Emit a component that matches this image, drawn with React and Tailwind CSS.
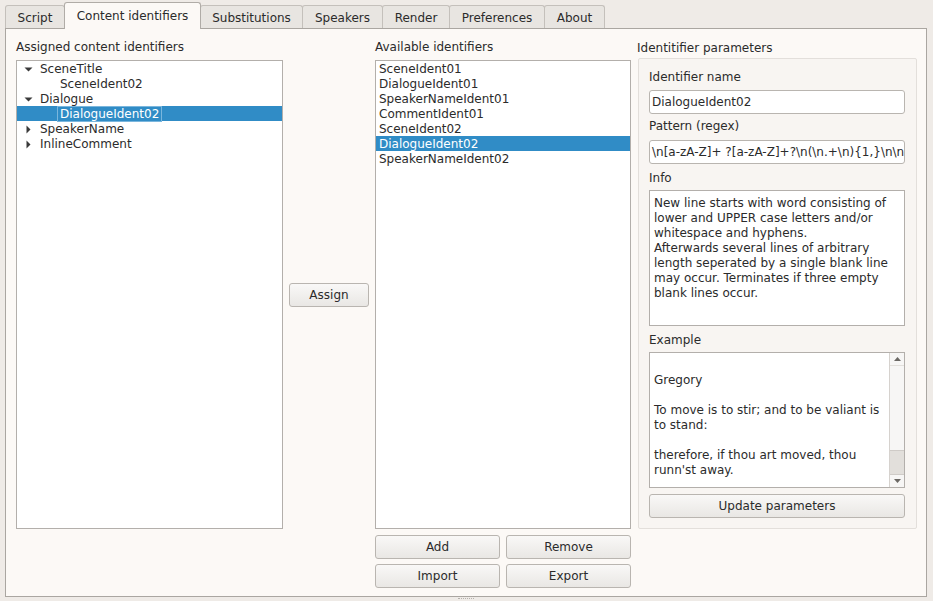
import React from 'react';

const tabs = [
  { label: 'Script', w: 'w-[60px]' },
  { label: 'Content identifiers', w: 'w-[137px]', active: true },
  { label: 'Substitutions', w: 'w-[103px]' },
  { label: 'Speakers', w: 'w-[81px]' },
  { label: 'Render', w: 'w-[68px]' },
  { label: 'Preferences', w: 'w-[96px]' },
  { label: 'About', w: 'w-[61px]' },
];

const available = [
  'SceneIdent01',
  'DialogueIdent01',
  'SpeakerNameIdent01',
  'CommentIdent01',
  'SceneIdent02',
  'DialogueIdent02',
  'SpeakerNameIdent02',
];

function Arrow({ open }) {
  return (
    <svg width="9" height="9" viewBox="0 0 9 9" className="shrink-0">
      {open ? <path d="M0.5 2.5 L8.5 2.5 L4.5 6.5 Z" fill="#3a3a3a" /> : <path d="M2.5 0.5 L6.5 4.5 L2.5 8.5 Z" fill="#3a3a3a" />}
    </svg>
  );
}

function Button({ children, className = '' }) {
  return (
    <button className={`h-[24px] rounded-[3px] border border-[#b9b5b0] bg-gradient-to-b from-[#f9f8f7] to-[#e9e7e4] text-[12px] text-[#2b2b2b] ${className}`}>
      {children}
    </button>
  );
}

function TreeRow({ children, depth = 0, open, selected }) {
  return (
    <div className={`flex h-[15px] items-center leading-[15px] ${selected ? 'bg-[#308cc6] text-white' : ''}`}>
      <div className="flex w-[23px] shrink-0 justify-center pt-[1px]">
        {open !== undefined && <Arrow open={open} />}
      </div>
      <span className={`pt-[1px] ${depth ? 'pl-[20px]' : ''}`}>
        {selected ? <span className="-ml-[3px] border border-[#7ab6dd] px-[2px]">{children}</span> : children}
      </span>
    </div>
  );
}

function Field({ value }) {
  return (
    <div className="h-[24px] overflow-hidden whitespace-nowrap rounded-[3px] border border-[#b9b5b0] bg-white px-[2px] text-[12px] leading-[22px] text-[#2b2b2b]">
      {value}
    </div>
  );
}

export default function App() {
  return (
    <div className="h-[601px] w-[933px] overflow-hidden bg-[#efebe7] font-['DejaVu_Sans',sans-serif] text-[12px] text-[#2b2b2b]">
      {/* tab strip */}
      <div className="flex h-[28px] items-end pl-[5px]">
        {tabs.map((t, i) =>
          t.active ? (
            <div
              key={t.label}
              className={`${t.w} relative z-10 -mb-[1px] -ml-[1px] flex h-[27px] items-center justify-center rounded-t-[3px] border border-b-0 border-[#b0aca7] bg-[#fcf9f6] pb-[1px]`}
            >
              {t.label}
            </div>
          ) : (
            <div
              key={t.label}
              className={`${t.w} ${i ? '-ml-[1px]' : ''} flex h-[23px] items-center justify-center rounded-t-[3px] border border-b-0 border-[#c4c0bb] bg-[#e8e5e1] pt-[1px]`}
            >
              {t.label}
            </div>
          )
        )}
      </div>

      {/* tab pane */}
      <div className="ml-[5px] flex h-[569px] w-[922px] border border-[#aaa6a1] bg-[#fcf9f6] pl-[10px] pt-[10px]">
        {/* assigned */}
        <div className="flex w-[267px] flex-col">
          <div className="h-[21px] pt-[1px] leading-[15px]">Assigned content identifiers</div>
          <div className="h-[469px] border border-[#b3afab] bg-white">
            <TreeRow open>SceneTitle</TreeRow>
            <TreeRow depth={1}>SceneIdent02</TreeRow>
            <TreeRow open>Dialogue</TreeRow>
            <TreeRow depth={1} selected>DialogueIdent02</TreeRow>
            <TreeRow open={false}>SpeakerName</TreeRow>
            <TreeRow open={false}>InlineComment</TreeRow>
          </div>
        </div>

        {/* assign */}
        <div className="ml-[6px] flex h-[490px] w-[80px] items-center pt-[21px]">
          <Button className="w-[80px]">Assign</Button>
        </div>

        {/* available */}
        <div className="ml-[6px] flex w-[256px] flex-col">
          <div className="h-[21px] pt-[1px] leading-[15px]">Available identifiers</div>
          <div className="h-[469px] border border-[#b3afab] bg-white">
            {available.map((a, i) => (
              <div key={a} className={`h-[15px] pl-[3px] pt-[1px] leading-[15px] ${i === 5 ? 'bg-[#308cc6] text-white' : ''}`}>
                {a}
              </div>
            ))}
          </div>
          <div className="mt-[6px] grid grid-cols-2 gap-x-[6px] gap-y-[5px]">
            <Button>Add</Button>
            <Button>Remove</Button>
            <Button>Import</Button>
            <Button>Export</Button>
          </div>
        </div>

        {/* parameters */}
        <div className="ml-[6px] flex w-[280px] flex-col">
          <div className="h-[19px] pt-[2px] leading-[15px]">Identitifier parameters</div>
          <div className="ml-[1px] flex h-[471px] flex-col rounded-[2px] border border-[#e3dfdb] bg-[#f8f5f2] pl-[10px] pr-[11px] pt-[10px]">
            <div className="h-[15px] pt-[1px] leading-[15px]">Identifier name</div>
            <div className="mt-[6px]">
              <Field value="DialogueIdent02" />
            </div>
            <div className="mt-[4px] h-[15px] pt-[1px] leading-[15px]">Pattern (regex)</div>
            <div className="mt-[7px]">
              <Field value={'\\n[a-zA-Z]+ ?[a-zA-Z]+?\\n(\\n.+\\n){1,}\\n\\n'} />
            </div>
            <div className="mt-[6px] h-[15px] pt-[1px] leading-[15px]">Info</div>
            <div className="mt-[5px] h-[136px] border border-[#b3afab] bg-white px-[4px] pt-[5px] leading-[15px]">
              New line starts with word consisting of lower and UPPER case letters and/or whitespace and hyphens.
              <br />
              Afterwards several lines of arbitrary length seperated by a single blank line may occur. Terminates if three empty blank lines occur.
            </div>
            <div className="mt-[6px] h-[15px] pt-[1px] leading-[15px]">Example</div>
            <div className="mt-[5px] flex h-[136px] border border-[#b3afab] bg-white">
              <div className="flex-1 px-[4px] pt-[5px] leading-[15px]">
                <div className="h-[15px]" />
                <div>Gregory</div>
                <div className="h-[15px]" />
                <div>To move is to stir; and to be valiant is to stand:</div>
                <div className="h-[15px]" />
                <div>therefore, if thou art moved, thou runn'st away.</div>
              </div>
              {/* scrollbar */}
              <div className="flex w-[15px] flex-col border-l border-[#d6d2ce] bg-[#f7f6f5]">
                <div className="flex h-[13px] items-center justify-center border-b border-[#e2dfdb]">
                  <svg width="7" height="4" viewBox="0 0 7 4"><path d="M0 4 L3.5 0 L7 4 Z" fill="#6b6864" /></svg>
                </div>
                <div className="flex-1" />
                <div className="h-[25px] border-y border-[#cfcbc7] bg-[#e2dfdb]" />
                <div className="flex h-[12px] items-center justify-center">
                  <svg width="7" height="4" viewBox="0 0 7 4"><path d="M0 0 L7 0 L3.5 4 Z" fill="#6b6864" /></svg>
                </div>
              </div>
            </div>
            <Button className="mt-[6px] w-full">Update parameters</Button>
          </div>
        </div>
      </div>

      {/* resize grip */}
      <div className="mt-[1px] flex justify-center">
        <div className="ml-[-2px] h-[1px] w-[16px] border-t border-dotted border-[#b5b1ac]" />
      </div>
    </div>
  );
}
